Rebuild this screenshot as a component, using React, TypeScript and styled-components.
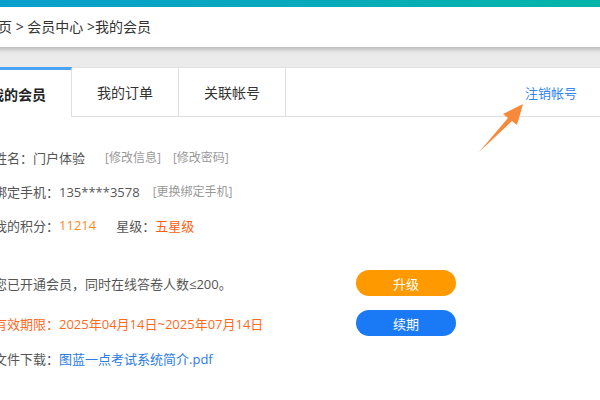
import styled, { createGlobalStyle } from 'styled-components';

const GlobalStyle = createGlobalStyle`
  html, body {
    margin: 0;
    padding: 0;
    background: #fff;
    overflow: hidden;
  }
  body {
    font-family: "Open Sans", "Noto Sans CJK SC", sans-serif;
    color: #333;
  }
`;

const Shell = styled.div`
  margin-left: -35px;
  width: 635px;
`;

const TopBar = styled.div`
  height: 7px;
  background: linear-gradient(90deg, #0a9dd0, #05b5a8);
`;

const Header = styled.div`
  height: 40px;
  display: flex;
  align-items: center;
  padding-left: 19px;
  background: #fff;
`;

const Crumbs = styled.div`
  font-size: 14px;
  line-height: 20px;
  color: #333;
  white-space: pre;
`;

const Gutter = styled.div`
  height: 20px;
  background: linear-gradient(#bdbdbd, #e4e4e4 5px, #ebebeb 8px);
`;

const Panel = styled.div`
  position: relative;
  background: #fff;
`;

const TabBar = styled.div`
  display: flex;
  height: 50px;
`;

const Tab = styled.div<{ $active?: boolean }>`
  width: 107px;
  display: flex;
  align-items: center;
  justify-content: center;
  font-size: 14px;
  box-sizing: border-box;
  border-right: 1px solid #dedede;
  border-top: ${(p) => (p.$active ? '3px solid #4aa3f5' : '1px solid #e2e2e2')};
  border-bottom: ${(p) => (p.$active ? 'none' : '1px solid #dedede')};
  font-weight: ${(p) => (p.$active ? 700 : 400)};
  color: ${(p) => (p.$active ? '#222' : '#333')};
`;

const TabFill = styled.div`
  flex: 1;
  display: flex;
  align-items: center;
  justify-content: flex-end;
  padding-right: 23px;
  box-sizing: border-box;
  border-top: 1px solid #e2e2e2;
  border-bottom: 1px solid #dedede;
`;

const CancelLink = styled.a`
  font-size: 13px;
  color: #3186f2;
  text-decoration: none;
`;

const Arrow = styled.svg`
  position: absolute;
  left: 511px;
  top: 33px;
`;

const Content = styled.div`
  padding: 23px 0 0 29px;
`;

const Group = styled.div<{ $top?: number }>`
  margin-top: ${(p) => p.$top ?? 0}px;
`;

const Row = styled.div<{ $h: number }>`
  height: ${(p) => p.$h}px;
  display: flex;
  align-items: center;
  font-size: 13px;
  color: #555;
  white-space: nowrap;
`;

const TextCol = styled.div`
  width: 362px;
`;

const Value = styled.span<{ $color?: string }>`
  color: ${(p) => p.$color ?? '#555'};
`;

const Gap = styled.span<{ $w: number }>`
  display: inline-block;
  width: ${(p) => p.$w}px;
`;

const Small = styled.a`
  font-size: 12px;
  color: #999;
  text-decoration: none;
`;

const FileLink = styled.a`
  color: #2a7be6;
  text-decoration: none;
`;

const Pill = styled.button<{ $bg: string }>`
  width: 100px;
  height: 26px;
  border: none;
  border-radius: 13px;
  background: ${(p) => p.$bg};
  color: #fff;
  font-family: inherit;
  font-size: 13px;
  padding: 0;
`;

export default function App() {
  return (
    <>
      <GlobalStyle />
      <Shell>
        <TopBar />
        <Header>
          <Crumbs>首页 &gt; 会员中心 &gt;我的会员</Crumbs>
        </Header>
        <Gutter />
        <Panel>
          <TabBar>
            <Tab $active>我的会员</Tab>
            <Tab>我的订单</Tab>
            <Tab>关联帐号</Tab>
            <TabFill>
              <CancelLink>注销帐号</CancelLink>
            </TabFill>
          </TabBar>
          <Arrow width="50" height="56" viewBox="0 0 50 56">
            <polygon points="47,4 41,25 36,21 3,52 32,18 27,14" fill="#f78a3a" />
          </Arrow>
          <Content>
            <Group>
              <Row $h={34}>
                姓名：门户体验
                <Gap $w={20} />
                <Small>[修改信息]</Small>
                <Gap $w={12} />
                <Small>[修改密码]</Small>
              </Row>
              <Row $h={34}>
                绑定手机：135****3578
                <Gap $w={13} />
                <Small>[更换绑定手机]</Small>
              </Row>
              <Row $h={34}>
                我的积分：<Value $color="#ff8a1c">11214</Value>
                <Gap $w={20} />
                星级：<Value $color="#ff5f0f">五星级</Value>
              </Row>
            </Group>
            <Group $top={21}>
              <Row $h={40}>
                <TextCol>您已开通会员，同时在线答卷人数≤200。</TextCol>
                <Pill $bg="#fe9a00">升级</Pill>
              </Row>
              <Row $h={40}>
                <TextCol>
                  <Value $color="#ff6a1f">有效期限：2025年04月14日~2025年07月14日</Value>
                </TextCol>
                <Pill $bg="#1a7af6">续期</Pill>
              </Row>
              <Row $h={30}>
                文件下载：<FileLink>图蓝一点考试系统简介.pdf</FileLink>
              </Row>
            </Group>
          </Content>
        </Panel>
      </Shell>
    </>
  );
}
